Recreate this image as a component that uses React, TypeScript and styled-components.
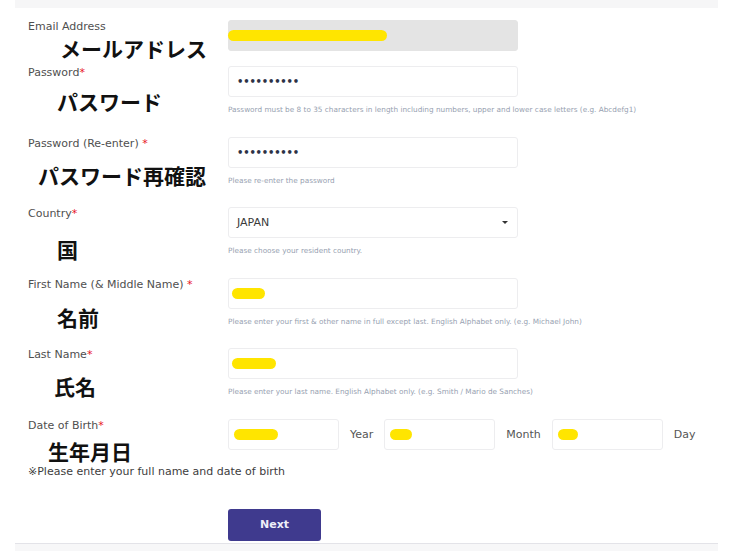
import { ReactElement, ReactNode } from "react";
import styled, { createGlobalStyle } from "styled-components";

const GlobalStyle = createGlobalStyle`
  html, body {
    margin: 0;
    padding: 0;
    background: #ffffff;
  }
  body {
    font-family: "DejaVu Sans", Verdana, sans-serif;
  }
`;

interface IRow {
  label: string;
  required?: "tight" | "spaced";
  jp: string;
  indent: number;
  offset: number;
  hint?: string;
  field: ReactNode;
}

function buildRows(): IRow[] {
  return [
    {
      label: "Email Address",
      jp: "メールアドレス",
      indent: 32,
      offset: 3,
      field: (
        <Field $disabled>
          <Blot $width={159} $shift={-9} />
        </Field>
      ),
    },
    {
      label: "Password",
      required: "tight",
      jp: "パスワード",
      indent: 29,
      offset: 10,
      hint: "Password must be 8 to 35 characters in length including numbers, upper and lower case letters (e.g. Abcdefg1)",
      field: (
        <Field>
          <Dots>••••••••••</Dots>
        </Field>
      ),
    },
    {
      label: "Password (Re-enter)",
      required: "spaced",
      jp: "パスワード再確認",
      indent: 10,
      offset: 13,
      hint: "Please re-enter the password",
      field: (
        <Field>
          <Dots>••••••••••</Dots>
        </Field>
      ),
    },
    {
      label: "Country",
      required: "tight",
      jp: "国",
      indent: 29,
      offset: 17,
      hint: "Please choose your resident country.",
      field: (
        <Field>
          <Value>JAPAN</Value>
          <Caret />
        </Field>
      ),
    },
    {
      label: "First Name (& Middle Name)",
      required: "spaced",
      jp: "名前",
      indent: 29,
      offset: 14,
      hint: "Please enter your first & other name in full except last. English Alphabet only. (e.g. Michael John)",
      field: (
        <Field>
          <Blot $width={33} $shift={-5} />
        </Field>
      ),
    },
    {
      label: "Last Name",
      required: "tight",
      jp: "氏名",
      indent: 26,
      offset: 13,
      hint: "Please enter your last name. English Alphabet only. (e.g. Smith / Mario de Sanches)",
      field: (
        <Field>
          <Blot $width={44} $shift={-5} />
        </Field>
      ),
    },
  ];
}

export default function App(): ReactElement {
  const rows = buildRows();
  return (
    <>
      <GlobalStyle />
      <Page>
        <TopBand />
        <Form>
          {rows.map((row) => (
            <Row key={row.label}>
              <LabelCell>
                <Label>
                  {row.label}
                  {row.required === "spaced" && " "}
                  {row.required && <Req>*</Req>}
                </Label>
                <Annotation $indent={row.indent} $offset={row.offset}>
                  {row.jp}
                </Annotation>
              </LabelCell>
              <FieldCell>
                {row.field}
                {row.hint && <Hint>{row.hint}</Hint>}
              </FieldCell>
            </Row>
          ))}
          <Row>
            <LabelCell>
              <Label>
                Date of Birth<Req>*</Req>
              </Label>
              <Annotation $indent={20} $offset={7}>
                生年月日
              </Annotation>
            </LabelCell>
            <DateLine>
              <DateBox>
                <Blot $width={44} $shift={-3} />
              </DateBox>
              <Unit>Year</Unit>
              <DateBox>
                <Blot $width={22} $shift={-3} />
              </DateBox>
              <Unit>Month</Unit>
              <DateBox>
                <Blot $width={20} $shift={-3} />
              </DateBox>
              <Unit>Day</Unit>
            </DateLine>
          </Row>
          <Note>※Please enter your full name and date of birth</Note>
          <Actions>
            <NextButton type="button">Next</NextButton>
          </Actions>
        </Form>
        <Footer />
      </Page>
    </>
  );
}

const Page = styled.div`
  width: 703px;
  height: 551px;
  margin-left: 15px;
  display: flex;
  flex-direction: column;
  overflow: hidden;
`;

const TopBand = styled.div`
  height: 8px;
  flex-shrink: 0;
  background: #f6f6f7;
`;

const Form = styled.div`
  padding: 12px 0 0 13px;
`;

const Row = styled.div`
  display: grid;
  grid-template-columns: 200px 290px;
  align-items: start;
  margin-bottom: 15px;
`;

const LabelCell = styled.div`
  display: flex;
  flex-direction: column;
`;

const Label = styled.div`
  font-size: 11px;
  line-height: 14px;
  color: #4f4f4f;
  white-space: nowrap;
`;

const Req = styled.span`
  color: #e8141e;
`;

/* the hand-written note hangs below its label and must not stretch the row */
const Annotation = styled.div<{ $indent: number; $offset: number }>`
  margin: ${(p) => p.$offset}px 0 -22px ${(p) => p.$indent}px;
  font-family: "Noto Sans CJK JP", "Noto Sans", sans-serif;
  font-weight: 700;
  font-size: 21px;
  line-height: 22px;
  color: #111111;
  white-space: nowrap;
`;

const FieldCell = styled.div`
  display: flex;
  flex-direction: column;
`;

const Field = styled.div<{ $disabled?: boolean }>`
  box-sizing: border-box;
  width: 290px;
  height: 31px;
  display: flex;
  align-items: center;
  padding: 0 8px;
  border: 1px solid ${(p) => (p.$disabled ? "#e4e4e4" : "#ededef")};
  border-radius: 3px;
  background: ${(p) => (p.$disabled ? "#e4e4e4" : "#ffffff")};
`;

const Blot = styled.span<{ $width: number; $shift: number }>`
  display: inline-block;
  width: ${(p) => p.$width}px;
  height: 11px;
  margin-left: ${(p) => p.$shift}px;
  border-radius: 6px;
  background: #ffe500;
`;

const Dots = styled.span`
  font-size: 10px;
  font-weight: 700;
  letter-spacing: -0.2px;
  color: #2c3246;
`;

const Value = styled.span`
  flex: 1;
  font-size: 11px;
  color: #3a3a3a;
`;

const Caret = styled.span`
  width: 0;
  height: 0;
  margin-right: 1px;
  border-left: 3px solid transparent;
  border-right: 3px solid transparent;
  border-top: 3px solid #333333;
`;

const Hint = styled.div`
  margin: 8px 0 6.5px;
  height: 10px;
  font-size: 7.3px;
  line-height: 10px;
  color: #979fb1;
  white-space: nowrap;
`;

const DateLine = styled.div`
  display: flex;
  align-items: center;
  white-space: nowrap;
`;

const DateBox = styled(Field)`
  width: 111px;
  flex-shrink: 0;
`;

const Unit = styled.span`
  padding: 0 11px;
  font-size: 11px;
  color: #555555;
`;

const Note = styled.div`
  margin-top: 1px;
  font-size: 11px;
  line-height: 14px;
  color: #3d3d3d;
`;

const Actions = styled.div`
  padding-left: 200px;
  margin-top: 30px;
`;

const NextButton = styled.button`
  width: 93px;
  height: 32px;
  border: none;
  border-radius: 3px;
  background: #3f3a8e;
  color: #eeeef8;
  font-family: "DejaVu Sans", Verdana, sans-serif;
  font-weight: 700;
  font-size: 11px;
  cursor: pointer;
`;

const Footer = styled.div`
  flex: 1;
  margin-top: 2px;
  border-top: 1px solid #e3e3e8;
  background: #f7f7f8;
`;
